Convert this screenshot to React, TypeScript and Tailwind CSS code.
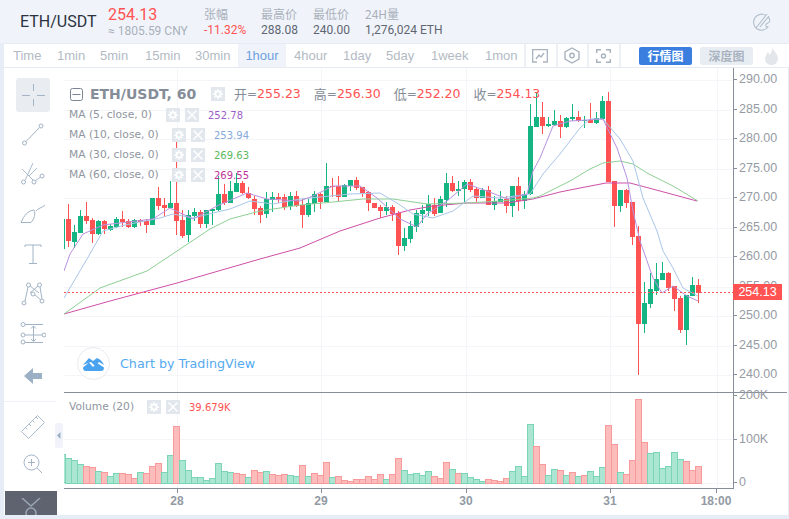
import { Fragment } from "react";

// [high, bodyTop, bodyBottom, low, isGreen] in page pixels, bar 0 at x=66
const candles: number[][] = [
  [203,218,240,246,0],[224,231,241,247,1],[209,215,232,232,1],[201,215,220,223,0],[217,219,233,242,0],
  [219,220,233,234,1],[219,220,228,233,0],[223,225,229,230,1],[216,218,226,227,1],[210,218,221,226,0],
  [218,220,226,227,0],[218,219,226,227,1],[218,219,221,225,0],[218,220,224,232,0],[197,197,224,224,1],
  [186,197,205,209,0],[197,204,207,216,0],[180,202,207,207,1],[140,202,220,234,0],[209,219,235,237,0],
  [209,214,234,241,1],[207,211,215,220,1],[209,211,223,227,0],[209,209,223,227,1],[208,208,210,224,1],
  [175,193,209,210,1],[183,193,202,204,0],[180,190,202,202,1],[172,182,191,191,1],[180,182,192,193,0],
  [186,192,197,198,0],[195,198,208,214,0],[205,207,214,222,0],[191,198,213,217,1],[191,196,199,211,1],
  [192,196,198,202,0],[193,196,206,209,0],[191,195,205,209,1],[190,195,205,206,0],[198,204,214,227,0],
  [198,202,214,216,1],[190,193,203,211,1],[192,193,201,208,0],[162,185,201,201,1],[177,185,186,196,0],
  [175,185,196,201,0],[183,184,196,196,1],[179,179,185,190,1],[176,179,187,189,0],[186,186,192,196,0],
  [190,191,202,210,0],[202,202,207,207,0],[204,206,210,217,0],[201,206,210,214,1],[204,206,213,220,0],
  [210,212,245,254,0],[227,237,245,250,1],[220,225,238,242,1],[209,212,226,231,1],[204,209,213,222,1],
  [194,203,210,215,1],[197,204,213,215,0],[195,198,212,212,1],[172,182,199,206,1],[175,182,190,191,0],
  [180,188,190,195,1],[179,181,188,201,1],[178,181,189,191,0],[186,188,197,201,0],[187,189,197,197,1],
  [185,189,204,204,0],[195,200,204,209,1],[190,198,201,201,1],[195,198,205,212,0],[185,185,205,216,1],
  [176,185,200,210,0],[190,193,200,208,1],[103,125,193,194,1],[91,116,126,126,1],[101,116,125,133,0],
  [116,123,125,126,1],[109,120,124,125,1],[114,120,126,137,0],[116,117,126,127,1],[103,116,118,120,1],
  [110,116,120,121,0],[115,119,120,127,1],[102,119,122,122,0],[111,117,122,123,1],[95,100,118,118,1],
  [91,100,181,181,0],[180,180,205,226,0],[189,189,205,211,1],[188,189,202,207,0],[201,201,236,244,0],
  [225,235,323,374,0],[281,302,323,332,1],[272,288,303,307,1],[262,278,290,294,1],[261,272,279,279,1],
  [271,272,287,290,0],[285,285,298,310,0],[295,297,329,332,0],[294,294,329,344,1],[276,284,295,295,1],
  [278,284,292,302,0],
];

// top of each volume bar in page pixels, baseline 482
const volTops = [
  457,459,463,465,466,470,471,475,472,472,473,477,471,472,465,462,471,454,425,459,
  469,476,476,479,477,462,470,471,472,473,476,469,471,470,473,474,473,474,475,464,
  475,472,474,461,476,475,479,480,478,478,475,478,473,478,473,457,469,473,472,474,
  470,475,477,461,468,472,472,476,478,480,478,479,480,477,470,465,475,423,445,463,
  474,468,469,474,471,475,474,470,475,466,424,443,471,473,459,398,441,452,451,467,
  465,451,458,460,469,465,
];
const volGreen = "1110010110001000110111111111001001000110100010000000010011111000101111000011110011010101110010000111111";

const ma5 = "64,270 70,253 83,233 103,224 153,218 170,207 193,218 217,205 247,192 267,198 300,200 313,195 333,185 360,185 377,197 400,218 417,226 427,213 447,200 467,183 487,190 507,198 527,193 533,170 540,157 553,125 570,120 603,118 617,147 627,177 633,210 640,240 653,277 662,292 673,285 687,295 698,300";
const ma10 = "64,297 87,258 103,230 125,224 160,217 173,213 193,217 213,212 230,208 250,200 273,203 300,198 330,195 350,193 380,192 397,202 413,213 433,217 453,210 473,195 500,197 530,193 543,173 560,153 580,127 590,118 603,118 620,138 633,160 643,197 657,230 663,250 673,267 683,287 698,295";
const ma30 = "64,313 100,287 147,270 177,250 210,228 230,218 260,210 300,204 333,201 363,198 393,198 427,203 467,202 500,200 533,197 540,195 570,180 590,168 603,162 620,160 633,163 647,172 673,185 698,200";
const ma60 = "64,313 110,300 177,282 260,258 300,247 340,230 380,217 410,209 433,205 467,202 507,202 533,198 560,191 580,187 606,182 630,182 660,190 697,200";

const priceGrid = [79, 109, 138, 168, 197, 227, 256, 286, 315, 345, 374];
const priceLabels = ["290.00", "285.00", "280.00", "275.00", "270.00", "265.00", "260.00", "255.00", "250.00", "245.00", "240.00"];
const dayLines = [177, 321, 466, 610, 717];

const legendFont = "font-['DejaVu_Sans',sans-serif]";

function GearBox() {
  return (
    <span className="flex h-[14px] w-[14px] items-center justify-center bg-[#e1e7ec]">
      <svg width="10" height="10" viewBox="0 0 10 10">
        <circle cx="5" cy="5" r="2.6" fill="none" stroke="#fff" strokeWidth="1.8" />
        <path d="M5 0v2M5 8v2M0 5h2M8 5h2M1.500 1.500l1.400 1.400M7.100 7.100l1.400 1.400M1.500 8.500l1.400-1.400M7.100 2.900l1.400-1.400" stroke="#fff" strokeWidth="1.4" />
      </svg>
    </span>
  );
}

function CloseBox() {
  return (
    <span className="flex h-[14px] w-[14px] items-center justify-center bg-[#e1e7ec]">
      <svg width="10" height="10" viewBox="0 0 10 10">
        <path d="M0.500 0.500l9 9M9.500 0.500l-9 9" stroke="#fff" strokeWidth="1.500" />
      </svg>
    </span>
  );
}

function MaRow({ name, value, color, gap }: { name: string; value: string; color: string; gap: string }) {
  return (
    <div className={`flex h-[20px] items-center text-[10.7px] text-[#8f96a0] ${legendFont}`}>
      <span className={gap}>{name}</span>
      <GearBox />
      <span className="ml-[5px]"><CloseBox /></span>
      <span className={`ml-[9px] text-[10px] ${color}`}>{value}</span>
    </div>
  );
}

function MainChart() {
  return (
    <svg className="block" width="669" height="324" viewBox="64 67 669 324">
      {priceGrid.map((y) => (
        <line key={y} x1="64" x2="733" y1={y + 0.5} y2={y + 0.5} stroke="#f3f5f8" />
      ))}
      {dayLines.map((x) => (
        <line key={x} x1={x + 0.5} x2={x + 0.5} y1="67" y2="391" stroke="#f3f5f8" />
      ))}
      {candles.map((c, i) => {
        const fill = c[4] ? "#14b583" : "#ff5252";
        const x = 66 + i * 6;
        return (
          <Fragment key={i}>
            <rect x={x + 2} y={c[0]} width="1" height={c[3] - c[0]} fill={fill} />
            <rect x={x} y={c[1]} width="5" height={Math.max(c[2] - c[1], 1)} fill={fill} />
          </Fragment>
        );
      })}
      <rect x="62" y="218" width="3" height="30" fill="#14b583" />
      <polyline points={ma60} fill="none" stroke="#cf4fa8" strokeWidth="1" />
      <polyline points={ma30} fill="none" stroke="#8ecf95" strokeWidth="1" />
      <polyline points={ma10} fill="none" stroke="#a9c6e8" strokeWidth="1" />
      <polyline points={ma5} fill="none" stroke="#b792de" strokeWidth="1" />
      <line x1="64" x2="733" y1="291.500" y2="291.500" stroke="#ff5252" strokeDasharray="2 2" />
    </svg>
  );
}

function VolumeChart() {
  return (
    <svg className="block" width="669" height="96" viewBox="64 392 669 96">
      <line x1="64" x2="733" y1="438.500" y2="438.500" stroke="#f3f5f8" />
      <line x1="64" x2="733" y1="482.500" y2="482.500" stroke="#f3f5f8" />
      {dayLines.map((x) => (
        <line key={x} x1={x + 0.5} x2={x + 0.5} y1="392" y2="488" stroke="#f3f5f8" />
      ))}
      <rect x="59.500" y="453.500" width="6" height="28" fill="#aae6d2" stroke="#7bd4b4" />
      {volTops.map((top, i) => {
        const green = volGreen[i] === "1";
        return (
          <rect
            key={i}
            x={65.5 + i * 6}
            y={top + 0.5}
            width="6"
            height={482 - top}
            fill={green ? "#aae6d2" : "#fcbcbc"}
            stroke={green ? "#7bd4b4" : "#f99a9a"}
          />
        );
      })}
    </svg>
  );
}

function TimeAxis() {
  const labels: [number, string][] = [[177, "28"], [321, "29"], [466, "30"], [610, "31"], [716, "18:00"]];
  return (
    <svg className="block" width="668" height="26" viewBox="64 488 668 26">
      {labels.map(([x, t]) => (
        <Fragment key={t}>
          <line x1={x + 0.5} x2={x + 0.5} y1="488" y2="492" stroke="#868e99" />
          <text x={x} y="504" textAnchor="middle" fontSize="12" fontWeight="700" fill="#939aa4" fontFamily="'Liberation Sans', sans-serif">
            {t}
          </text>
        </Fragment>
      ))}
    </svg>
  );
}

const icon = "#a3b4c6";

function SideIcon({ children }: { children: React.ReactNode }) {
  return <div className="flex h-[40px] items-center justify-center">{children}</div>;
}

function Sidebar() {
  return (
    <div className="relative flex w-[53px] shrink-0 flex-col items-stretch bg-white pt-[10px] pl-[5px]">
      <div className="mx-auto mb-[2px] flex h-[34px] w-[34px] items-center justify-center rounded-[3px] bg-[#e9edf2]">
        <svg width="24" height="24" viewBox="0 0 24 24" fill="none" stroke={icon}>
          <path d="M12.500 1v7M12.500 16v7M1 12.500h8M16 12.500h8" />
        </svg>
      </div>
      <SideIcon>
        <svg width="24" height="24" viewBox="0 0 24 24" fill="none" stroke={icon}>
          <circle cx="3.500" cy="21" r="2" />
          <circle cx="20" cy="4" r="2" />
          <path d="M5 19.500L18.500 5.500" />
        </svg>
      </SideIcon>
      <SideIcon>
        <svg width="24" height="24" viewBox="0 0 24 24" fill="none" stroke={icon}>
          <circle cx="2.500" cy="20" r="2" />
          <circle cx="13" cy="20" r="2" />
          <circle cx="21" cy="14" r="2" />
          <path d="M4 18.500L12 1M1 7l11 11M14.500 18.500L19.500 15M8 14L16 6" strokeWidth="0.900" />
        </svg>
      </SideIcon>
      <SideIcon>
        <svg width="26" height="20" viewBox="0 0 26 20" fill="none" stroke={icon}>
          <path d="M1 18.500c3-7 7-12 13-12.500c2 4 0 9-3 12.500z" />
          <path d="M16 7c2-3 6-3 9-6" />
        </svg>
      </SideIcon>
      <SideIcon>
        <svg width="18" height="20" viewBox="0 0 18 20" fill="none" stroke={icon}>
          <path d="M1 3V1h16v2M9 1v18M5 19.500h8" />
        </svg>
      </SideIcon>
      <SideIcon>
        <svg width="24" height="24" viewBox="0 0 24 24" fill="none" stroke={icon}>
          <circle cx="3" cy="21" r="2" />
          <circle cx="7.500" cy="3" r="2" />
          <circle cx="12" cy="12" r="2" />
          <circle cx="18.500" cy="3" r="2" />
          <circle cx="21" cy="19" r="2" />
          <path d="M4 19L7 5M9 4l9 7M9 11L17 4M19 5l2 12M14 13l6 5" />
        </svg>
      </SideIcon>
      <SideIcon>
        <svg width="26" height="24" viewBox="0 0 26 24" fill="none" stroke={icon}>
          <circle cx="3" cy="2.500" r="2" />
          <circle cx="3" cy="13" r="2" />
          <circle cx="24" cy="13" r="2" />
          <circle cx="3" cy="20" r="2" />
          <path d="M5 2.500h18M5 13h17M5 20.500h18M13.500 4v15" />
          <path d="M11 6.500l2.500-2.500l2.500 2.500M11 17l2.500 2.500l2.500-2.500" />
        </svg>
      </SideIcon>
      <div className="mt-[2px]">
        <SideIcon>
          <svg width="18" height="16" viewBox="0 0 18 16" fill="#9bb0c4">
            <path d="M9 0L0 8l9 8v-5h9V5H9z" />
          </svg>
        </SideIcon>
      </div>
      <div className="mt-[5px] -ml-[5px] h-px w-[52px] bg-[#eef1f5]" />
      <div className="mt-[5px]">
        <SideIcon>
          <svg width="24" height="24" viewBox="0 0 24 24" fill="none" stroke={icon} strokeWidth="0.900">
            <path d="M0.500 16.500L16.500 0.500L23.500 7.500L7.500 23.500zM4.500 12.500l2 2M8 9l2 2M11.500 5.500l2 2M15 2l2 2" />
          </svg>
        </SideIcon>
      </div>
      <div className="-mt-[3px]">
        <SideIcon>
          <svg width="20" height="20" viewBox="0 0 20 20" fill="none" stroke={icon}>
            <circle cx="8.500" cy="8.500" r="7.500" />
            <path d="M8.500 5v7M5 8.500h7M14 14l5 5" />
          </svg>
        </SideIcon>
      </div>
      <div className="mt-auto -ml-[4px] flex h-[24px] w-[52px] items-start justify-center overflow-hidden bg-[#5f6370] pt-[7px]">
        <svg width="20" height="20" viewBox="0 0 20 20" fill="none" stroke="#9aa5b4" strokeWidth="1.500">
          <path d="M1 0l9 8l9-8" />
          <circle cx="10" cy="15" r="5" />
        </svg>
      </div>
      <div className="absolute top-[355px] left-[51px] flex h-[25px] w-[8px] items-center justify-center rounded-[2px] bg-[#f0f4fa]">
        <svg width="4" height="7" viewBox="0 0 4 7"><path d="M3.500 0v7L0 3.500z" fill="#9bb0c4" /></svg>
      </div>
    </div>
  );
}

const periods = [
  { label: "Time", cls: "ml-[9px] w-[28px]" },
  { label: "1min", cls: "ml-[16px] w-[28px]" },
  { label: "5min", cls: "ml-[15px] w-[28px]" },
  { label: "15min", cls: "ml-[17px] w-[34px]" },
  { label: "30min", cls: "ml-[16px] w-[35px]" },
];
const periodsAfter = [
  { label: "4hour", cls: "ml-[8px] w-[33px]" },
  { label: "1day", cls: "ml-[16px] w-[26px]" },
  { label: "5day", cls: "ml-[17px] w-[28px]" },
  { label: "1week", cls: "ml-[17px] w-[37px]" },
  { label: "1mon", cls: "ml-[17px] w-[32px]" },
];

function Toolbar() {
  return (
    <div className="ml-[4px] flex h-[25px] items-center border-y border-[#e6ebf3] bg-white font-['Liberation_Sans',sans-serif] text-[13px] text-[#b3bac4]">
      {periods.map((p) => (
        <span key={p.label} className={`${p.cls} whitespace-nowrap`}>{p.label}</span>
      ))}
      <span className="ml-[8px] flex h-[23px] w-[48px] items-center justify-center bg-[#f0f4fa] text-[#6f9fe0]">1hour</span>
      {periodsAfter.map((p) => (
        <span key={p.label} className={`${p.cls} whitespace-nowrap`}>{p.label}</span>
      ))}
      <span className="ml-[7px] h-[23px] w-[2px] bg-[#edf1f6]" />
      <span className="ml-[6px] flex w-[16px]">
        <svg width="16" height="14" viewBox="0 0 16 14" fill="none" stroke="#a9b3bf" strokeWidth="1.300">
          <path d="M5 13H0.700V0.700H15.300V13H11M4 10l3-4l2 2l3-4" />
        </svg>
      </span>
      <span className="ml-[8px] h-[23px] w-[2px] bg-[#edf1f6]" />
      <span className="ml-[6px] flex w-[16px]">
        <svg width="16" height="17" viewBox="0 0 16 17" fill="none" stroke="#a9b3bf" strokeWidth="1.400">
          <path d="M8 1l7 4v7l-7 4l-7-4V5z" />
          <circle cx="8" cy="8.500" r="2.200" />
        </svg>
      </span>
      <span className="ml-[7px] h-[23px] w-[2px] bg-[#edf1f6]" />
      <span className="ml-[7px] flex w-[16px]">
        <svg width="15" height="14" viewBox="0 0 15 14" fill="none" stroke="#a9b3bf" strokeWidth="1.400">
          <path d="M0.700 4V0.700H5M10 0.700h4.300V4M14.300 10v3.300H10M5 13.300H0.700V10" />
          <circle cx="7.500" cy="7" r="2" />
        </svg>
      </span>
      <span className="ml-[7px] h-[23px] w-[2px] bg-[#edf1f6]" />
      <span className="ml-[18px] flex h-[18px] w-[53px] items-center justify-center rounded-[2px] bg-[#3a7fe0] font-['Noto_Sans_CJK_SC',sans-serif] text-[12px] font-bold text-white">行情图</span>
      <span className="ml-[8px] flex h-[18px] w-[53px] items-center justify-center rounded-[2px] bg-[#e8edf3] font-['Noto_Sans_CJK_SC',sans-serif] text-[12px] font-bold text-[#a9b3bf]">深度图</span>
      <span className="ml-[12px] flex">
        <svg width="13" height="18" viewBox="0 0 13 18" fill="#e3e6ea">
          <path d="M7 0c1 4 6 6 6 11.500C13 15.500 10 18 6.500 18S0 15.500 0 12c0-3 2-4.500 2.500-7c1 .5 2 2 2 3C6 6 7.500 3.500 7 0z" />
        </svg>
      </span>
    </div>
  );
}

function Stat({ title, value, cls, valueCls }: { title: string; value: string; cls: string; valueCls: string }) {
  return (
    <div className={`flex flex-col ${cls}`}>
      <span className="h-[16px] font-['Noto_Sans_CJK_SC',sans-serif] text-[12px] leading-[16px] text-[#a9b0ba]">{title}</span>
      <span className={`h-[16px] text-[12px] leading-[16px] ${valueCls}`}>{value}</span>
    </div>
  );
}

function Header() {
  return (
    <div className="flex h-[43px] shrink-0 items-center bg-[#f0f4fa] pl-[20px] font-['Roboto',sans-serif]">
      <span className="w-[88px] text-[16px] text-[#2b3240]">ETH/USDT</span>
      <div className="flex w-[96px] flex-col">
        <span className="h-[19px] text-[16px] leading-[19px] text-[#ff5252]">254.13</span>
        <span className="h-[14px] text-[12px] leading-[14px] text-[#a9b0ba]">≈ 1805.59 CNY</span>
      </div>
      <Stat title="张幅" value="-11.32%" cls="w-[57px]" valueCls="text-[#ff5252]" />
      <Stat title="最高价" value="288.08" cls="w-[52px]" valueCls="text-[#5f6672]" />
      <Stat title="最低价" value="240.00" cls="w-[52px]" valueCls="text-[#5f6672]" />
      <Stat title="24H量" value="1,276,024 ETH" cls="w-[388px]" valueCls="text-[#5f6672]" />
      <svg width="18" height="18" viewBox="0 0 18 18" fill="none" stroke="#b3bfcc" strokeWidth="1.100">
        <path d="M13 2.500A8 8 0 1 0 15 14c-2 0-2.500-1-2-2.500c.4-1.500 3.500-1 3.700-3.500c.1-1.500-.5-3-1.500-4" />
        <path d="M3 15L14 1M7 14l9-11" />
      </svg>
    </div>
  );
}

export default function App() {
  return (
    <div className="flex h-[519px] w-[789px] flex-col overflow-hidden bg-[#e7edf6]">
      <Header />
      <Toolbar />
      <div className="mb-[5px] ml-[4px] mr-[1px] flex flex-1 bg-white">
        <Sidebar />
        <div className="ml-[7px] flex w-[723px] flex-col">
          {/* price pane */}
          <div className="flex h-[325px] border-b-[1.5px] border-[#868e99]">
            <div className="relative h-[324px] w-[669px] overflow-hidden">
              <MainChart />
              <div className="absolute top-[18px] left-[5px] flex flex-col">
                <div className={`flex h-[16px] items-center ${legendFont} text-[#858d98]`}>
                  <svg width="13" height="13" viewBox="0 0 13 13" fill="none" stroke="#7c8591" className="mr-[7px] ml-px">
                    <rect x="0.500" y="0.500" width="12" height="12" rx="2" />
                    <path d="M2.500 6.500h8" />
                  </svg>
                  <span className="w-[121px] text-[14px] font-bold whitespace-nowrap">ETH/USDT, 60</span>
                  <GearBox />
                  <span className="ml-[9px] font-['Noto_Sans_CJK_SC',sans-serif] text-[13px]">开</span>
                  <span className="text-[12px]">=</span>
                  <span className="text-[12.5px] text-[#ff5252]">255.23</span>
                  <span className="ml-[13px] font-['Noto_Sans_CJK_SC',sans-serif] text-[13px]">高</span>
                  <span className="text-[12px]">=</span>
                  <span className="text-[12.5px] text-[#ff5252]">256.30</span>
                  <span className="ml-[13px] font-['Noto_Sans_CJK_SC',sans-serif] text-[13px]">低</span>
                  <span className="text-[12px]">=</span>
                  <span className="text-[12.5px] text-[#ff5252]">252.20</span>
                  <span className="ml-[13px] font-['Noto_Sans_CJK_SC',sans-serif] text-[13px]">收</span>
                  <span className="text-[12px]">=</span>
                  <span className="text-[12.5px] text-[#ff5252]">254.13</span>
                </div>
                <div className="mt-[3px]">
                  <MaRow name="MA (5, close, 0)" value="252.78" color="text-[#9c5fc7]" gap="w-[97px]" />
                  <MaRow name="MA (10, close, 0)" value="253.94" color="text-[#86a9d8]" gap="w-[103px]" />
                  <MaRow name="MA (30, close, 0)" value="269.63" color="text-[#5cb85c]" gap="w-[103px]" />
                  <MaRow name="MA (60, close, 0)" value="269.55" color="text-[#c0339a]" gap="w-[103px]" />
                </div>
              </div>
              <div className="absolute top-[279px] left-[13px] flex items-center">
                <span className="flex h-[33px] w-[33px] items-center justify-center rounded-full border border-[#e8eaed] bg-white">
                  <svg width="22" height="14" viewBox="0 0 22 14" fill="#4aa3ef">
                    <path d="M0 8L6 1l4 3l4-3q5 2 7 7l-5-3l-4 4l-4-4z" />
                    <path d="M0 10.500l6-5l4 4.500l4-4l7 4.500q0 3.500-3 3.500H3q-3 0-3-3.500z" />
                  </svg>
                </span>
                <span className={`ml-[10px] text-[12.7px] text-[#55aaf0] ${legendFont}`}>Chart by TradingView</span>
              </div>
            </div>
            <div className="relative flex h-[324px] w-[48px] shrink-0 flex-col border-l-[1.5px] border-[#868e99] font-['Liberation_Sans',sans-serif] text-[12.5px] text-[#969ba4]">
              <div className="-mt-[3px] flex flex-col">
                {priceLabels.map((p) => (
                  <span key={p} className="flex h-[29.5px] shrink-0 items-center whitespace-nowrap">
                    <span className="mr-[2px] h-px w-[3px] bg-[#868e99]" />
                    {p}
                  </span>
                ))}
              </div>
              <span className="absolute top-[216px] -left-px flex h-[16px] w-[49px] items-center justify-center bg-[#ff5252] text-white">254.13</span>
            </div>
          </div>
          {/* volume pane */}
          <div className="flex h-[96px]">
            <div className="relative w-[669px] overflow-hidden border-b-[1.5px] border-[#868e99]">
              <VolumeChart />
              <div className={`absolute top-[6px] left-[5px] flex items-center text-[10.7px] text-[#8f96a0] ${legendFont}`}>
                <span className="w-[78px]">Volume (20)</span>
                <GearBox />
                <span className="ml-[5px]"><CloseBox /></span>
                <span className="ml-[9px] text-[10px] text-[#ff5252]">39.679K</span>
              </div>
            </div>
            <div className="flex w-[48px] shrink-0 flex-col border-l-[1.5px] border-[#868e99] font-['Liberation_Sans',sans-serif] text-[12.5px] text-[#969ba4]">
              <span className="-mt-[5px] flex h-[14px] items-center"><span className="mr-[2px] h-px w-[3px] bg-[#868e99]" />200K</span>
              <span className="mt-[30px] flex h-[14px] items-center"><span className="mr-[2px] h-px w-[3px] bg-[#868e99]" />100K</span>
              <span className="mt-[29px] flex h-[14px] items-center"><span className="mr-[2px] h-px w-[3px] bg-[#868e99]" />0</span>
            </div>
          </div>
          <TimeAxis />
        </div>
      </div>
    </div>
  );
}
